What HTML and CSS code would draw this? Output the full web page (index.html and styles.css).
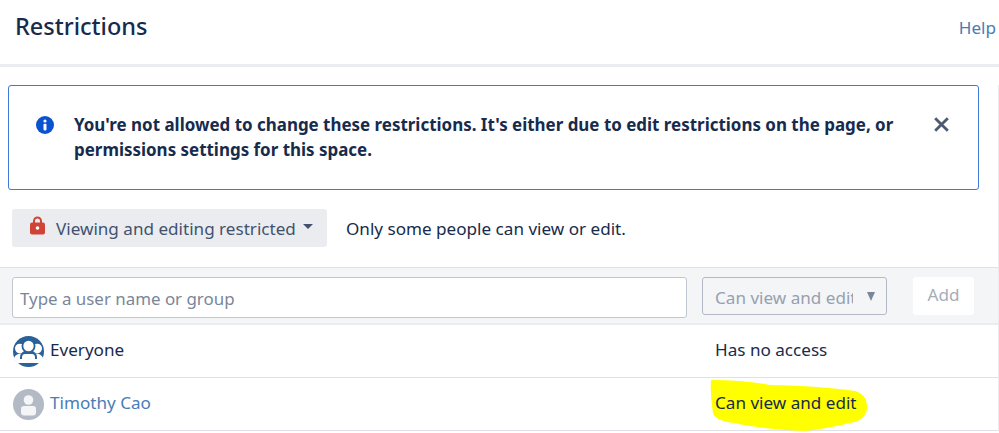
FILE: index.html
```html
<!DOCTYPE html>
<html>
<head>
  <meta charset="utf-8">
  <link rel="stylesheet" href="styles.css">
</head>
<body>
  <div class="header">
    <h2 class="title">Restrictions</h2>
    <a class="help">Help</a>
  </div>

  <div class="content">
    <div class="alert">
      <svg class="alert-icon" width="18" height="18" viewBox="0 0 18 18">
        <circle cx="9" cy="9" r="9" fill="#0b52cf"/>
        <circle cx="9" cy="5" r="1.6" fill="#fff"/>
        <rect x="7.5" y="7.8" width="3" height="6.6" rx="0.8" fill="#fff"/>
      </svg>
      <div class="alert-text">You're not allowed to change these restrictions. It's either due to edit restrictions on the page, or permissions settings for this space.</div>
      <svg class="alert-close" width="15" height="15" viewBox="0 0 15 15">
        <path d="M1.2 1.2 L13.8 13.8 M13.8 1.2 L1.2 13.8" stroke="#4d5a73" stroke-width="2.8" fill="none"/>
      </svg>
    </div>

    <div class="mode-row">
      <div class="mode-btn">
        <svg class="lock" width="15" height="19" viewBox="0 0 15 19">
          <path d="M4 8 V5 a3.5 3.5 0 0 1 7 0 V8" stroke="#d04437" stroke-width="2" fill="none"/>
          <rect x="0" y="6.5" width="15" height="12" rx="2" fill="#d04437"/>
          <circle cx="7.5" cy="12" r="1.8" fill="#fff"/>
        </svg>
        <span>Viewing and editing restricted</span>
        <span class="caret"></span>
      </div>
      <span class="mode-desc">Only some people can view or edit.</span>
    </div>

    <div class="add-row">
      <input class="user-input" type="text" placeholder="Type a user name or group">
      <div class="perm-select">
        <span class="perm-label">Can view and edit</span>
        <span class="perm-arrow"></span>
      </div>
      <div class="add-btn">Add</div>
    </div>

    <div class="perm-row">
      <div class="who">
        <svg class="avatar" width="31" height="31" viewBox="0 0 31 31">
          <circle cx="15.5" cy="15.5" r="15.5" fill="#2a6197"/>
          <circle cx="6.8" cy="12.5" r="4.8" fill="#fff"/>
          <circle cx="24.2" cy="12.5" r="4.8" fill="#fff"/>
          <path d="M1 22 Q3 17.5 8 17.5 H23 Q28 17.5 30 22 L29 24 H2 Z" fill="#fff"/>
          <circle cx="15.5" cy="10" r="7" fill="#2a6197"/>
          <circle cx="15.5" cy="10" r="5.2" fill="#fff"/>
          <path d="M7 24 V21.5 Q7 16 12 16 H19 Q24 16 24 21.5 V24 Z" fill="#2a6197"/>
          <path d="M9 23 V21.5 Q9 18 12 18 H19 Q22 18 22 21.5 V23 Z" fill="#fff"/>
          <path d="M2 23 H29 Q28.5 25.5 27 27 H4 Q2.5 25.5 2 23 Z" fill="#fff"/>
        </svg>
        <span class="name">Everyone</span>
      </div>
      <div class="access">Has no access</div>
    </div>

    <div class="perm-row">
      <div class="who">
        <svg class="avatar" width="31" height="31" viewBox="0 0 31 31">
          <circle cx="15.5" cy="15.5" r="15.5" fill="#b3bac5"/>
          <circle cx="15.5" cy="11" r="4.8" fill="#f4f5f7"/>
          <path d="M8 19.5 Q8 17 11 17 H20 Q23 17 23 19.5 V23.5 Q23 26.5 20 26.5 H11 Q8 26.5 8 23.5 Z" fill="#f4f5f7"/>
        </svg>
        <a class="name link">Timothy Cao</a>
      </div>
      <div class="access">
        <svg class="highlight" width="160" height="54" viewBox="0 0 160 54">
          <path d="M1 1 Q35 1 60 6 Q110 7 145 12 Q158 16 157 30 Q155 42 140 44 Q115 50 95 52 Q50 50 25 44 Q5 42 3 34 Q0 15 1 1 Z" fill="#ffff00"/>
        </svg>
        <span class="access-text">Can view and edit</span>
      </div>
    </div>
  </div>
</body>
</html>
```

FILE: styles.css
```css
body {
  margin: 0;
  background: white;
  font-family: "Noto Sans", sans-serif;
  font-size: 17.1px;
  color: #172b4d;
  overflow: hidden;
}
.header {
  display: flex;
  justify-content: space-between;
  height: 64px;
  border-bottom: 3px solid #ebecf0;
}
.title {
  margin: 8px 0 0 15px;
  font-size: 23.5px;
  font-weight: 500;
  line-height: 36px;
}
.help {
  margin: 14px 3px 0 0;
  line-height: 28px;
  color: #4a7cb5;
}
.content {
  border-right: 1px solid #ebecf0;
}
.alert {
  display: flex;
  align-items: flex-start;
  box-sizing: border-box;
  width: 971px;
  height: 105px;
  margin: 18px 0 0 8px;
  padding: 26px 29px 0 27px;
  border: 1.5px solid #3f78d6;
  border-radius: 3px;
}
.alert-icon {
  flex: none;
  margin: 4px 20px 0 0;
}
.alert-text {
  flex: 1;
  font-weight: 700;
  font-size: 16.95px;
  line-height: 25px;
}
.alert-close {
  flex: none;
  margin: 5px 0 0 20px;
}
.mode-row {
  display: flex;
  align-items: center;
  margin: 19px 0 0 12px;
}
.mode-btn {
  display: flex;
  align-items: center;
  box-sizing: border-box;
  width: 315px;
  height: 38px;
  padding-left: 18px;
  padding-bottom: 1px;
  background: #ebecf0;
  border-radius: 3px;
  color: #42526e;
}
.lock {
  margin: -4px 11px 0 0;
}
.mode-btn span:first-of-type {
  padding-top: 2px;
}
.caret {
  margin: -3px 0 0 7px;
  border-top: 5px solid #42526e;
  border-left: 5px solid transparent;
  border-right: 5px solid transparent;
}
.mode-desc {
  margin-left: 19px;
  padding-top: 1px;
}
.add-row {
  display: flex;
  align-items: flex-start;
  box-sizing: border-box;
  height: 58px;
  margin-top: 20px;
  padding: 9px 24px 0 12px;
  background: #f4f5f7;
  border-top: 1px solid #dfe1e6;
  border-bottom: 2px solid #ebecf0;
}
.user-input {
  box-sizing: border-box;
  width: 675px;
  height: 41px;
  padding: 1px 7px 0;
  background: white;
  border: 1px solid #c1c7d0;
  border-radius: 3px;
  font-family: "Noto Sans", sans-serif;
  font-size: 16.9px;
}
.user-input::placeholder {
  color: #7a869a;
  opacity: 1;
}
.perm-select {
  position: relative;
  box-sizing: border-box;
  width: 185px;
  height: 38px;
  margin-left: 15px;
  padding: 8px 0 0 12px;
  border: 1px solid #b3bac5;
  border-radius: 3px;
  color: #97a0af;
}
.perm-label {
  display: block;
  width: 138px;
  overflow: hidden;
  white-space: nowrap;
}
.perm-arrow {
  position: absolute;
  top: 14px;
  right: 11px;
  border-top: 9px solid #7a869a;
  border-left: 4px solid transparent;
  border-right: 4px solid transparent;
}
.add-btn {
  box-sizing: border-box;
  width: 61px;
  height: 38px;
  margin-left: 26px;
  background: white;
  border-radius: 3px;
  color: #a5adba;
  text-align: center;
  line-height: 36px;
}
.perm-row {
  display: flex;
  align-items: center;
  box-sizing: border-box;
  height: 53px;
  padding-left: 13px;
  padding-bottom: 2px;
  border-bottom: 1px solid #dfe1e6;
}
.who {
  display: flex;
  align-items: center;
  width: 702px;
}
.avatar {
  flex: none;
  margin-top: 3px;
}
.name {
  margin: -2px 0 0 6px;
}
.access {
  position: relative;
  margin-top: -1px;
}
.link {
  color: #4a7cb5;
}
.access-text {
  position: relative;
}
.highlight {
  position: absolute;
  left: -5px;
  top: -12px;
}
```
